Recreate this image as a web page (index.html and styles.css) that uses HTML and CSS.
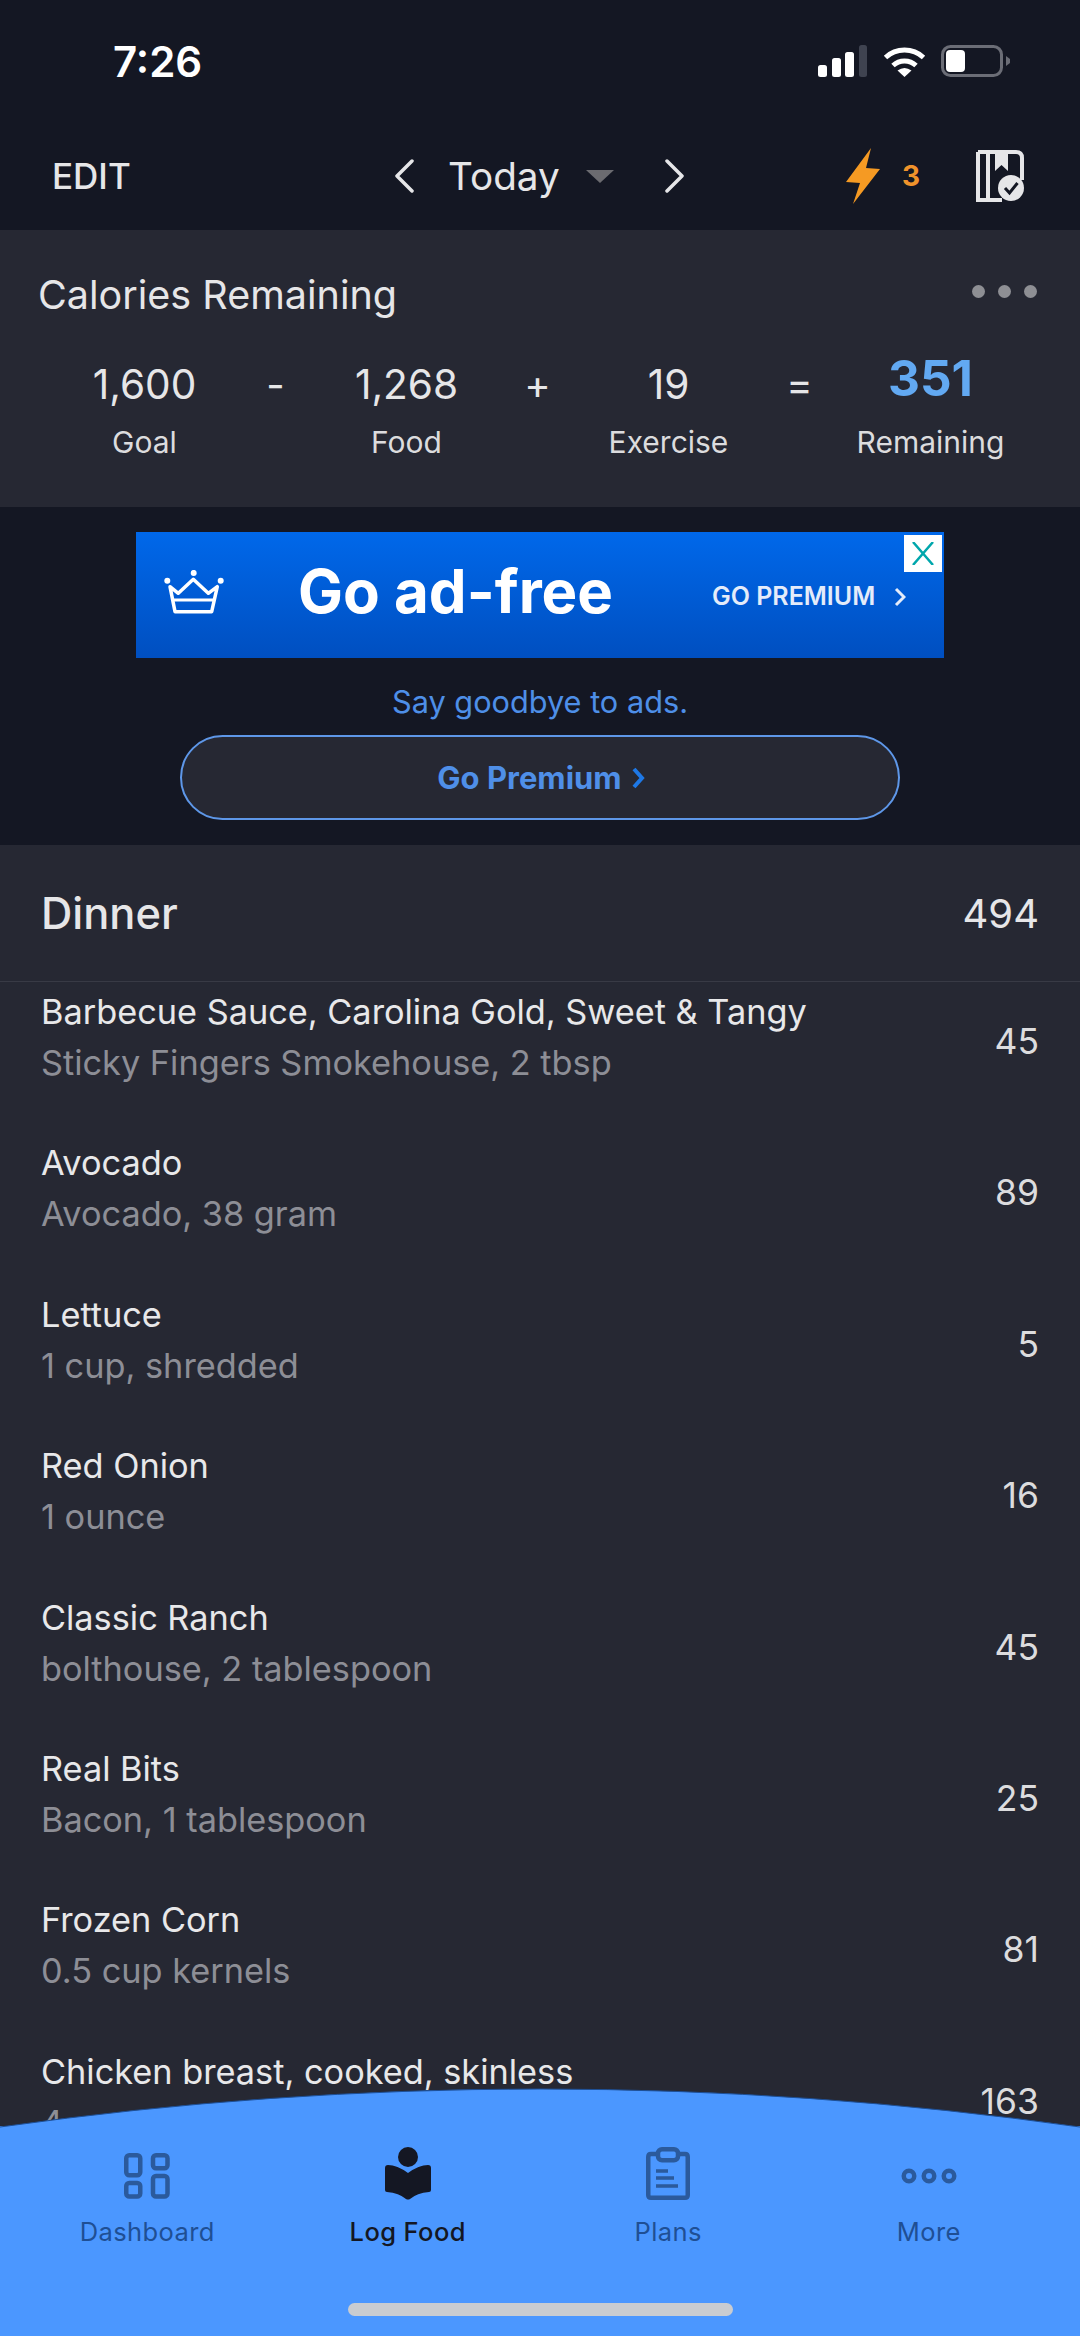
FILE: index.html

```html
<!DOCTYPE html>
<html lang="en">
<head>
  <meta charset="UTF-8" />
  <meta name="viewport" content="width=device-width, initial-scale=1.0" />
  <title>Diary</title>
  <link rel="stylesheet" href="styles.css">
</head>
<body>
  <div class="top">
    <div class="status">
      <span class="time">7:26</span>
      <div class="status-icons">
        <svg class="signal" width="50" height="32" viewBox="0 0 50 32">
          <rect x="0" y="20" width="9" height="12" rx="2.5" fill="#fff"/>
          <rect x="14" y="13" width="9" height="19" rx="2.5" fill="#fff"/>
          <rect x="27" y="7" width="9" height="25" rx="2.5" fill="#fff"/>
          <rect x="41" y="0" width="8" height="32" rx="2.5" fill="#3f4350"/>
        </svg>
        <svg class="wifi" width="43" height="32" viewBox="0 0 43 32">
          <path d="M2.5 12.5 A28 28 0 0 1 40.5 12.5" fill="none" stroke="#fff" stroke-width="5"/>
          <path d="M10 20.5 A17 17 0 0 1 33 20.5" fill="none" stroke="#fff" stroke-width="5"/>
          <path d="M14.5 25.5 Q21.5 20.5 28.5 25.5 L21.5 32 Z" fill="#fff"/>
        </svg>
        <svg class="battery" width="70" height="32" viewBox="0 0 70 32">
          <rect x="1.5" y="1.5" width="59" height="29" rx="8" fill="none" stroke="#6b6d76" stroke-width="3"/>
          <rect x="5" y="5" width="19" height="22" rx="4" fill="#fff"/>
          <path d="M65 11 L69 14 V18 L65 21 Z" fill="#6b6d76"/>
        </svg>
      </div>
    </div>
    <div class="toolbar">
      <span class="edit">EDIT</span>
      <div class="date-nav">
        <svg width="20" height="34" viewBox="0 0 20 34"><path d="M18 2 L3 17 L18 32" fill="none" stroke="#e6e6e8" stroke-width="3.5" stroke-linecap="round" stroke-linejoin="round"/></svg>
        <span class="today">Today</span>
        <svg class="caret" width="28" height="13" viewBox="0 0 28 13"><path d="M0 0 H28 L14 13 Z" fill="#6b6b70"/></svg>
        <svg class="next" width="20" height="34" viewBox="0 0 20 34"><path d="M2 2 L17 17 L2 32" fill="none" stroke="#e6e6e8" stroke-width="3.5" stroke-linecap="round" stroke-linejoin="round"/></svg>
      </div>
      <div class="toolbar-right">
        <svg width="34" height="56" viewBox="0 0 34 56"><path d="M25 0 L0 34 L14 35 L7 56 L34 21 L20 20 Z" fill="#f59a23"/></svg>
        <span class="streak">3</span>
        <svg class="book-check" width="48" height="52" viewBox="0 0 48 52">
          <path d="M2 2 H40 Q46 2 46 8 V30 M2 2 V50 H26 M12 2 V50" fill="none" stroke="#e6e6e8" stroke-width="4"/>
          <path d="M19 2 H32 V21 L25.500 15 L19 21 Z" fill="#e6e6e8"/>
          <circle cx="35" cy="38" r="13" fill="#e6e6e8"/>
          <path d="M29 38 L33.500 43 L41.500 33" fill="none" stroke="#141723" stroke-width="3"/>
        </svg>
      </div>
    </div>
  </div>

  <section class="summary">
    <div class="summary-head">
      <h2>Calories Remaining</h2>
      <div class="dots"><i></i><i></i><i></i></div>
    </div>
    <div class="equation">
      <div class="term"><b>1,600</b><span>Goal</span></div>
      <div class="op">-</div>
      <div class="term"><b>1,268</b><span>Food</span></div>
      <div class="op">+</div>
      <div class="term"><b>19</b><span>Exercise</span></div>
      <div class="op">=</div>
      <div class="term result"><b>351</b><span>Remaining</span></div>
    </div>
  </section>

  <section class="promo">
    <div class="banner">
      <svg class="crown" width="60" height="44" viewBox="0 0 60 44">
        <path d="M6 16.700 L14.300 23.300 L29.300 9.300 L44.300 23.300 L53.300 16.700 L47.700 41.700 H11 Z" fill="none" stroke="#fff" stroke-width="3.500" stroke-linejoin="round"/>
        <path d="M10 30 H49" fill="none" stroke="#fff" stroke-width="3"/>
        <circle cx="3.300" cy="10.700" r="3" fill="#fff"/>
        <circle cx="29.700" cy="2.900" r="3" fill="#fff"/>
        <circle cx="56.700" cy="10.700" r="3" fill="#fff"/>
      </svg>
      <span class="banner-title">Go ad-free</span>
      <span class="banner-cta">GO PREMIUM</span>
      <svg class="banner-chev" width="12" height="20" viewBox="0 0 12 20"><path d="M2 2 L10 10 L2 18" fill="none" stroke="#e4ecfa" stroke-width="3"/></svg>
      <div class="close">
        <svg width="22" height="23" viewBox="0 0 22 23"><path d="M1 0 L21 23 M21 0 L1 23" stroke="#00a7ac" stroke-width="2.500"/></svg>
      </div>
    </div>
    <p class="bye">Say goodbye to ads.</p>
    <div class="premium-btn">
      <span>Go Premium</span>
      <svg width="15" height="22" viewBox="0 0 15 22"><path d="M3 2 L11 11 L3 20" fill="none" stroke="#1e78e6" stroke-width="4"/></svg>
    </div>
  </section>

  <section class="meal">
    <div class="meal-head">
      <h3>Dinner</h3>
      <span>494</span>
    </div>
    <div class="food"><div><p class="name">Barbecue Sauce, Carolina Gold, Sweet &amp; Tangy</p><p class="desc">Sticky Fingers Smokehouse, 2 tbsp</p></div><span class="cal">45</span></div>
    <div class="food"><div><p class="name">Avocado</p><p class="desc">Avocado, 38 gram</p></div><span class="cal">89</span></div>
    <div class="food"><div><p class="name">Lettuce</p><p class="desc">1 cup, shredded</p></div><span class="cal">5</span></div>
    <div class="food"><div><p class="name">Red Onion</p><p class="desc">1 ounce</p></div><span class="cal">16</span></div>
    <div class="food"><div><p class="name">Classic Ranch</p><p class="desc">bolthouse, 2 tablespoon</p></div><span class="cal">45</span></div>
    <div class="food"><div><p class="name">Real Bits</p><p class="desc">Bacon, 1 tablespoon</p></div><span class="cal">25</span></div>
    <div class="food"><div><p class="name">Frozen Corn</p><p class="desc">0.5 cup kernels</p></div><span class="cal">81</span></div>
    <div class="food"><div><p class="name">Chicken breast, cooked, skinless</p><p class="desc">4</p></div><span class="cal">163</span></div>
  </section>

  <nav class="tabbar">
    <svg class="arc" width="1080" height="38" viewBox="0 0 1080 38" preserveAspectRatio="none">
      <path d="M0 38 Q540 -38 1080 38 Z" fill="#4b97ff"/>
      <path d="M0 38 Q540 -38 1080 38" fill="none" stroke="#1d4f96" stroke-width="1"/>
    </svg>
    <div class="tabs">
      <div class="tab">
        <svg class="dash-icon" width="46" height="46" viewBox="0 0 46 46" fill="none" stroke="#2b5a9c" stroke-width="4.500">
          <rect x="2.250" y="2.250" width="14" height="20" rx="3"/>
          <rect x="29" y="2.250" width="14.500" height="13" rx="3"/>
          <rect x="2.250" y="30" width="14" height="13.500" rx="3"/>
          <rect x="29" y="23" width="14.500" height="20.500" rx="3"/>
        </svg>
        <span>Dashboard</span>
      </div>
      <div class="tab active">
        <svg width="46" height="53" viewBox="0 0 46 53" fill="#141723">
          <circle cx="23" cy="10" r="10"/>
          <path d="M3 18 Q12 18 23 26 Q34 18 43 18 Q46 18 46 21 V43 Q46 45 44 45 Q32 46 25 52 Q23 53 21 52 Q14 46 2 45 Q0 45 0 43 V21 Q0 18 3 18 Z"/>
        </svg>
        <span>Log Food</span>
      </div>
      <div class="tab">
        <svg width="44" height="53" viewBox="0 0 44 53" fill="none" stroke="#2b5a9c" stroke-width="4.500">
          <path d="M11 7 H5 Q2.250 7 2.250 10 V48 Q2.250 50.750 5 50.750 H39 Q41.750 50.750 41.750 48 V10 Q41.750 7 39 7 H33"/>
          <rect x="12" y="2.250" width="20" height="11" rx="4"/>
          <path d="M10 24 H22 M10 31 H28 M10 39 H32" stroke-width="3.500"/>
        </svg>
        <span>Plans</span>
      </div>
      <div class="tab">
        <svg class="more-icon" width="56" height="16" viewBox="0 0 56 16" fill="none" stroke="#2b5a9c" stroke-width="4.500">
          <circle cx="8" cy="8" r="5.250"/>
          <circle cx="28" cy="8" r="5.250"/>
          <circle cx="48" cy="8" r="5.250"/>
        </svg>
        <span>More</span>
      </div>
    </div>
    <div class="home-bar"></div>
  </nav>
</body>
</html>
```

FILE: styles.css

```css
* {
  box-sizing: border-box;
}
html, body {
  margin: 0;
  height: 2336px;
  overflow: hidden;
}
body {
  position: relative;
  font-family: Inter, "Noto Sans", sans-serif;
  background-color: #262833;
  color: #e6e6e8;
}
p, h2, h3 {
  margin: 0;
  font-weight: 400;
}

/* top bar */
.top {
  height: 230px;
  background-color: #141723;
}
.status {
  height: 122px;
  padding: 45px 69px 0 113px;
  display: flex;
  justify-content: space-between;
}
.time {
  font-size: 42px;
  font-weight: 600;
  line-height: 34px;
  color: #fff;
}
.status-icons {
  display: flex;
  height: 32px;
  gap: 15px;
}
.toolbar {
  height: 108px;
  padding: 0 56px 0 52px;
  display: flex;
  align-items: center;
  justify-content: space-between;
}
.edit {
  width: 342px;
  font-size: 35px;
  font-weight: 500;
}
.date-nav {
  display: flex;
  align-items: center;
}
.today {
  margin: 0 26px 0 34px;
  font-size: 38.7px;
  width: 112px;
  white-space: nowrap;
}
.next {
  margin-left: 51px;
}
.toolbar-right {
  flex: 1;
  display: flex;
  align-items: center;
  justify-content: flex-end;
}
.streak {
  margin-left: 22px;
  font-size: 28px;
  font-weight: 700;
  color: #f0932b;
}
.book-check {
  margin-left: 56px;
}

/* calories summary */
.summary {
  height: 277px;
  padding: 42px 43px 0 38px;
}
.summary-head {
  display: flex;
  justify-content: space-between;
  align-items: center;
}
.summary-head h2 {
  font-size: 39.5px;
  line-height: 46px;
}
.dots {
  display: flex;
  gap: 13px;
  margin-top: -8px;
}
.dots i {
  width: 13px;
  height: 13px;
  border-radius: 50%;
  background-color: #8e8f94;
}
.equation {
  display: grid;
  grid-template-columns: repeat(7, 131px);
  margin: 43px 0 0 41px;
}
.term {
  display: flex;
  flex-direction: column;
  align-items: center;
  white-space: nowrap;
}
.term b {
  font-size: 40.6px;
  font-weight: 400;
  line-height: 48px;
}
.term span {
  margin-top: 13px;
  font-size: 30px;
  line-height: 40px;
  color: #dcdcde;
}
.op {
  font-size: 40px;
  line-height: 48px;
  text-align: center;
}
.result b {
  margin-top: -7px;
  padding-bottom: 7px;
  font-size: 49.5px;
  font-weight: 700;
  color: #62a9f2;
}

/* ad block */
.promo {
  height: 338px;
  padding-top: 25px;
  background-color: #141723;
}
.banner {
  position: relative;
  width: 808px;
  height: 126px;
  margin-left: 136px;
  display: flex;
  align-items: center;
  background: linear-gradient(#0068ea, #004fc0);
  color: #fff;
}
.crown {
  margin: 0 0 6px 28px;
  flex: none;
}
.banner-title {
  margin: 0 0 8px 74px;
  font-size: 60px;
  font-weight: 700;
  white-space: nowrap;
}
.banner-cta {
  position: absolute;
  left: 576px;
  top: 50px;
  font-size: 25px;
  font-weight: 600;
  line-height: 28px;
  color: #e4ecfa;
  white-space: nowrap;
}
.banner-chev {
  position: absolute;
  left: 758px;
  top: 55px;
}
.close {
  position: absolute;
  top: 3px;
  right: 2px;
  width: 38px;
  height: 37px;
  background-color: #fff;
  display: flex;
  align-items: center;
  justify-content: center;
}
.bye {
  margin-top: 25px;
  text-align: center;
  font-size: 30.7px;
  line-height: 38px;
  color: #4e8fe8;
}
.premium-btn {
  width: 720px;
  height: 85px;
  margin: 14px 0 0 180px;
  padding-left: 3px;
  border: 2.5px solid #5e97e8;
  border-radius: 43px;
  background-color: #262833;
  display: flex;
  align-items: center;
  justify-content: center;
  gap: 9px;
  font-size: 31px;
  font-weight: 700;
  color: #4f8fe8;
}

/* food list */
.meal {
  padding: 0 41px;
}
.meal-head {
  height: 137px;
  margin: 0 -41px;
  padding: 0 41px;
  border-bottom: 1px solid #383a45;
  display: flex;
  align-items: center;
  justify-content: space-between;
}
.meal-head h3 {
  font-size: 43.4px;
  font-weight: 500;
}
.meal-head span {
  font-size: 40px;
}
.food {
  height: 151.4px;
  padding-top: 5px;
  display: flex;
  justify-content: space-between;
}
.name {
  font-size: 34.3px;
  line-height: 50px;
  color: #e8e8ea;
}
.desc {
  margin-top: 1px;
  font-size: 34.3px;
  line-height: 50px;
  color: #8d8e96;
}
.cal {
  margin-top: 34px;
  font-size: 35.5px;
  line-height: 42px;
  color: #dcdcde;
}

/* tab bar sits over the list */
.tabbar {
  position: absolute;
  left: 0;
  right: 0;
  bottom: 0;
  height: 210px;
  background-color: #4b97ff;
}
.arc {
  position: absolute;
  left: 0;
  top: -37px;
  display: block;
  overflow: visible;
}
.tabs {
  position: relative;
  display: grid;
  grid-template-columns: repeat(4, 260.5px);
  padding: 21px 0 0 17px;
}
.tab {
  height: 118px;
  display: flex;
  flex-direction: column;
  align-items: center;
  color: #1f4f94;
  font-size: 25.5px;
  letter-spacing: 0.4px;
  position: relative;
}
.tab span {
  position: absolute;
  top: 67px;
  line-height: 36px;
  white-space: nowrap;
}
.tab.active {
  color: #141723;
  font-weight: 500;
}
.dash-icon {
  margin-top: 6px;
}
.more-icon {
  margin-top: 21px;
}
.home-bar {
  position: absolute;
  left: 348px;
  bottom: 20px;
  width: 385px;
  height: 13px;
  border-radius: 7px;
  background-color: #c9ccd1;
}
```
